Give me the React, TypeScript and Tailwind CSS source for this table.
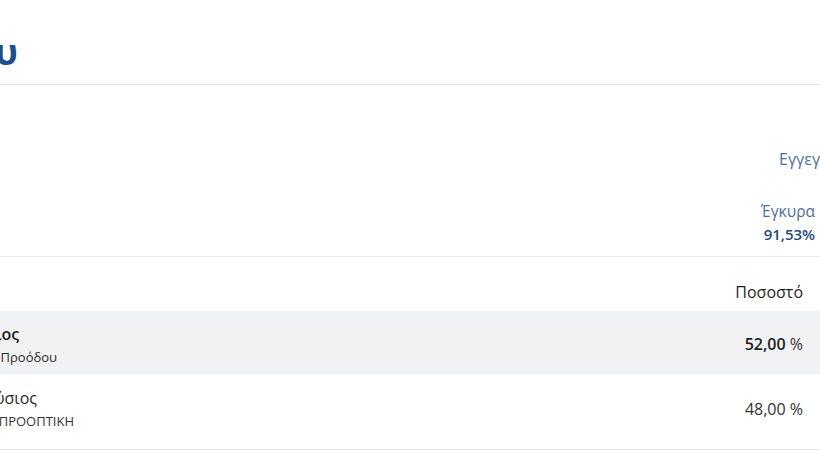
import React from "react";

export default function App() {
  return (
    <div className="w-[820px] h-[451px] overflow-hidden bg-white font-['Open_Sans',sans-serif] text-[#222]">
      {/* Title bar */}
      <div className="h-[85px] border-b border-[#e3e3e3] pt-[30px]">
        <div className="flex w-[18px] justify-end">
          <h1 className="shrink-0 whitespace-nowrap text-[36px] font-bold leading-[44px] text-[#1b4f8e]">
            Αποτελέσματα Δήμου
          </h1>
        </div>
      </div>

      {/* Summary */}
      <div className="h-[172px] border-b border-[#e6e6e6] pt-[63px]">
        <div className="flex">
          <div className="ml-[779px] whitespace-nowrap text-[16px] leading-[22px] text-[#4d6e9e]">
            Εγγεγραμμένοι
          </div>
        </div>
        <div className="mt-[30px] flex justify-end pr-[5px]">
          <div className="flex flex-col items-end">
            <span className="text-[15.5px] leading-[22px] text-[#4d6e9e]">Έγκυρα</span>
            <span className="mt-[1px] text-[15px] font-semibold leading-[22px] text-[#1e4b7c]">91,53%</span>
          </div>
        </div>
      </div>

      {/* Table header */}
      <div className="flex h-[54px] justify-end pr-[17px] pt-[24px]">
        <span className="text-[16px] font-medium leading-[22px] text-[#1f1f1f]">Ποσοστό</span>
      </div>

      {/* Row 1 */}
      <div className="flex h-[63px] justify-between bg-[#f1f2f3] pr-[17px]">
        <div className="flex flex-col pt-[12px]">
          <div className="flex w-[19px] justify-end">
            <span className="shrink-0 whitespace-nowrap text-[16px] font-semibold leading-[22px] text-[#1f1f1f]">
              Παπαδόπουλος Γεώργιος
            </span>
          </div>
          <div className="mt-[3px] flex w-[57px] justify-end">
            <span className="shrink-0 whitespace-nowrap text-[13px] font-medium leading-[18px] text-[#2a2a2a]">
              Δημοτική Κίνηση Προόδου
            </span>
          </div>
        </div>
        <div className="pt-[22px] text-[16px] leading-[22px]">
          <span className="font-semibold text-[#1f1f1f]">52,00</span>
          <span className="text-[#333]"> %</span>
        </div>
      </div>

      {/* Row 2 */}
      <div className="flex h-[76px] justify-between border-b border-[#e4e4e4] pr-[17px]">
        <div className="flex flex-col pt-[13px]">
          <div className="flex w-[37px] justify-end">
            <span className="shrink-0 whitespace-nowrap text-[16px] leading-[22px] text-[#2a2a2a]">
              Νικολάου Διονύσιος
            </span>
          </div>
          <div className="mt-[3px] flex w-[74px] justify-end">
            <span className="shrink-0 whitespace-nowrap text-[13px] leading-[18px] text-[#333]">
              ΝΕΑ ΠΡΟΟΠΤΙΚΗ
            </span>
          </div>
        </div>
        <div className="pt-[24px] text-[16px] leading-[22px] text-[#333]">48,00 %</div>
      </div>
    </div>
  );
}
